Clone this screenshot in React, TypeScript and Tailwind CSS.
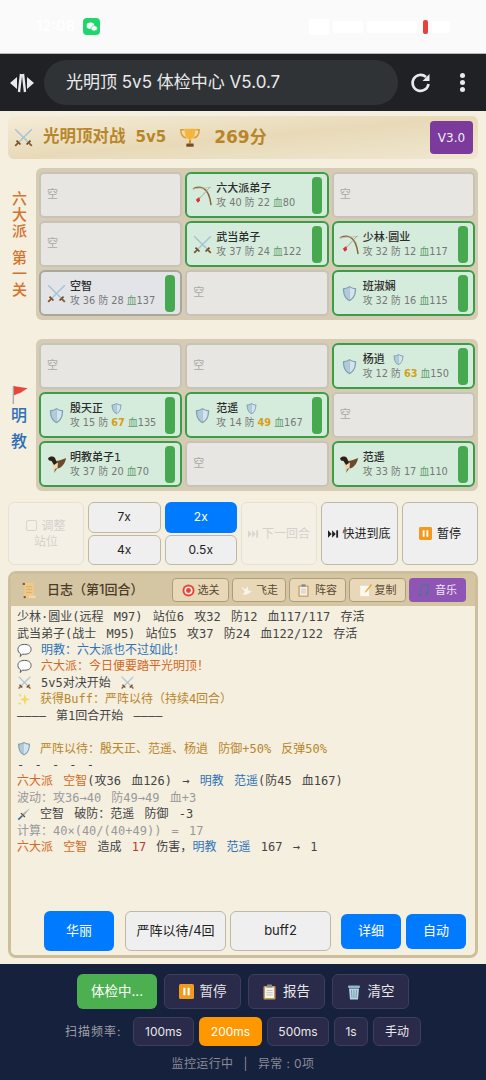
import React from 'react';

const cjk = '"Noto Sans CJK SC", sans-serif';

// small drawings standing in for the emoji of the original
const Swords = ({className = 'w-[21px] h-[21px]'}: {className?: string}) => (
    <svg viewBox="0 0 24 24" className={className}>
        <path d="M21.5 2.5 L6 18" stroke="#a8c4d4" strokeWidth="1.8"/>
        <path d="M2.5 2.5 L18 18" stroke="#a8c4d4" strokeWidth="1.8"/>
        <path d="M4 15.5 L8.5 20 M20 15.5 L15.5 20" stroke="#6b4a2a" strokeWidth="2"/>
        <path d="M6.5 17.5 L2.5 21.5 M17.5 17.5 L21.5 21.5" stroke="#8a5a2c" strokeWidth="2.2"/>
    </svg>
);

const Bow = () => (
    <svg viewBox="0 0 22 22" className="w-[21px] h-[21px]">
        <path d="M1 4 C5 1.5 9 2 12 3.5 C17 6 19 13 20 21" fill="none" stroke="#8a6238" strokeWidth="1.5"/>
        <path d="M1 4 L20 2.5" stroke="#c4b8a6" strokeWidth="0.8"/>
        <path d="M19 2 L7 15" stroke="#a89a88" strokeWidth="0.9"/>
        <path d="M4 15.5 L7.5 12.5 L8.5 16.5 L6 18.5 Z" fill="#d8303c"/>
    </svg>
);

const Shield = ({className = 'w-[15px] h-[17px]'}: {className?: string}) => (
    <svg viewBox="0 0 18 20" className={className}>
        <path d="M9 1 C11.5 3 14.5 3.6 17 3.6 C17 11 15 16 9 19.4 C3 16 1 11 1 3.6 C3.5 3.6 6.5 3 9 1 Z" fill="#7f9fb2"/>
        <path d="M9 2.6 C11 4 13.5 4.8 15.4 4.9 C15.3 10.8 13.8 15 9 17.6 Z" fill="#d3e4ee"/>
        <path d="M9 2.6 C7 4 4.5 4.8 2.6 4.9 C2.7 10.8 4.2 15 9 17.6 Z" fill="#b2cbda"/>
    </svg>
);

const Eagle = () => (
    <svg viewBox="0 0 18 18" className="w-[18px] h-[18px]">
        <path d="M7 6 C11 6 15 4.5 18 3 C17.5 8 14 12.5 10 13.5 L6 11 Z" fill="#6e4a2c"/>
        <path d="M4 6 L10 8 L9.5 13 L6 18 L5 14 Z" fill="#e8d8b0"/>
        <path d="M7 14 L9.5 13 L6 18 Z" fill="#7a5a38"/>
        <path d="M0 3.5 C2 1 5 1 7 3 L9 8 L6 10 L3.5 6 L1 5.5 Z" fill="#2e2018"/>
    </svg>
);

const Bubble = () => (
    <svg viewBox="0 0 16 16" className="w-[15px] h-[15px] shrink-0">
        <path d="M8 1.5 C12.5 1.5 15 3.5 15 6.8 C15 10 12.5 12 8 12 L5.5 12 L3.5 14.5 L3.8 11.5 C2 10.5 1 9 1 6.8 C1 3.5 3.5 1.5 8 1.5 Z" fill="#fbfbfb" stroke="#555" strokeWidth="1"/>
    </svg>
);

const Spark = () => (
    <svg viewBox="0 0 16 16" className="w-[14px] h-[14px] shrink-0">
        <path d="M9 2 L10.4 7 L15 8.5 L10.4 10 L9 15 L7.6 10 L3 8.5 L7.6 7 Z" fill="#f6d860"/>
        <path d="M3.5 1 L4.2 3 L6 3.6 L4.2 4.2 L3.5 6.2 L2.8 4.2 L1 3.6 L2.8 3 Z" fill="#f6d860"/>
        <path d="M3 11 L3.6 12.6 L5 13.2 L3.6 13.8 L3 15.4 L2.4 13.8 L1 13.2 L2.4 12.6 Z" fill="#f6d860"/>
    </svg>
);

const Dagger = () => (
    <svg viewBox="0 0 16 16" className="w-[14px] h-[14px] shrink-0">
        <path d="M15 1 L6 8 L8 10 Z" fill="#9db4c2"/>
        <path d="M4.5 7 L9 11.5" stroke="#6b4a2a" strokeWidth="1.6"/>
        <path d="M6 10 L1.5 14.5" stroke="#3b6f8f" strokeWidth="2"/>
    </svg>
);

const PauseBox = ({className = 'w-[13px] h-[13px]'}: {className?: string}) => (
    <svg viewBox="0 0 14 14" className={className}>
        <rect width="14" height="14" rx="1.5" fill="#f39a1c"/>
        <rect x="4" y="3.5" width="2" height="7" fill="#fff"/>
        <rect x="8" y="3.5" width="2" height="7" fill="#fff"/>
    </svg>
);

const SkipEnd = ({color}: {color: string}) => (
    <svg viewBox="0 0 12 8" className="w-[11px] h-[8px]">
        <path d="M0 0 L4 4 L0 8 Z M4.5 0 L8.5 4 L4.5 8 Z" fill={color}/>
        <rect x="9" y="0" width="2" height="8" fill={color}/>
    </svg>
);

const Clipboard = ({className = 'w-[13px] h-[15px]'}: {className?: string}) => (
    <svg viewBox="0 0 13 15" className={className}>
        <rect x="0.5" y="1.5" width="12" height="13.5" rx="1" fill="#c99b5a"/>
        <rect x="2" y="3" width="9" height="10.5" fill="#f4f1ea"/>
        <rect x="4" y="0" width="5" height="3" rx="0.5" fill="#8c8c8c"/>
        <path d="M3.5 6 H9.5 M3.5 8.2 H9.5 M3.5 10.4 H9.5" stroke="#b9b9b9" strokeWidth="0.8"/>
    </svg>
);

const Trash = () => (
    <svg viewBox="0 0 14 16" className="w-[14px] h-[16px]">
        <rect x="1" y="1.5" width="12" height="2.5" rx="1" fill="#8db8cc"/>
        <path d="M2 4.5 H12 L11 15.5 H3 Z" fill="#b7d5e2"/>
        <path d="M4.5 6 L5 14 M7 6 V14 M9.5 6 L9 14" stroke="#6d97ab" strokeWidth="0.9"/>
    </svg>
);

type CardData = {
    name: string;
    icon: React.ReactNode;
    atk: number;
    def: number;
    hp: number;
    buffed?: boolean;
    dead?: boolean;
};

const Empty = () => (
    <div className="h-[46px] rounded-[5px] border-2 border-[#c8c3b8] bg-[#e8e6e2] flex items-center pl-[6px] text-[11px] text-[#a9a9a5]">
        空
    </div>
);

const Card = ({name, icon, atk, def, hp, buffed, dead}: CardData) => (
    <div
        className={`h-[46px] rounded-[6px] border-2 flex items-center pl-[3px] pr-[5px] ${
            dead ? 'border-[#a9a69c] bg-[#e3e4e8]' : 'border-[#3a9d4a] bg-[#d5ecdc]'
        }`}
    >
        <div className="w-[25px] flex justify-center shrink-0">{icon}</div>
        <div className="flex-1 min-w-0 pl-[1px]">
            <div className="flex items-center text-[11px] leading-[15px] text-[#2b2b2b] font-medium">
                <span>{name}</span>
                {buffed && <span className="ml-[8px] flex"><Shield className="w-[11px] h-[13px]"/></span>}
            </div>
            <div className="text-[9.75px] leading-[13px] text-[#777] whitespace-nowrap">
                攻 {atk} 防 <span className={buffed ? 'text-[#d4a017] font-bold' : ''}>{def}</span> <span className="text-[#5d9c6a]">血</span>{hp}
            </div>
        </div>
        <div className="w-[10px] h-[37px] rounded-[4px] bg-[#46a94f] shrink-0"/>
    </div>
);

const Grid = ({children}: {children: React.ReactNode}) => (
    <div className="flex-1 grid grid-cols-3 gap-x-[3px] gap-y-[3px] rounded-[6px] bg-[#d6ccb4] px-[3px] py-[4px]">
        {children}
    </div>
);

const ctl = 'rounded-[6px] border border-[#bfb8a8] bg-[#efefef] flex items-center justify-center text-[12px] text-[#222]';
const ghost = 'rounded-[6px] border border-[#e6e1d5] bg-[#f4f0e6] flex items-center justify-center text-[12px] text-[#d4d1ca]';
const logBtn = 'h-[24px] rounded-[4px] border border-[#ad9d7d] bg-[#e8d8b8] flex items-center justify-center gap-[3px] text-[11px] text-[#5a4a32]';
const darkBtn = 'rounded-[6px] border border-[#3d3d5c] bg-[#2a2a4a] flex items-center justify-center text-[#e8e8e8]';

const Line = ({children, className = ''}: {children?: React.ReactNode; className?: string}) => (
    <div className={`flex items-center h-[16.43px] whitespace-pre [word-spacing:3px] ${className}`}>{children}</div>
);

const O = ({children}: {children: React.ReactNode}) => <span className="text-[#d2691e]">{children}</span>;
const B = ({children}: {children: React.ReactNode}) => <span className="text-[#2f73b5]">{children}</span>;

export default function App() {
    return (
        <div
            className="w-[486px] h-[1080px] overflow-hidden flex flex-col bg-[#f5efe0]"
            style={{fontFamily: `"DejaVu Sans", ${cjk}`}}
        >
            {/* Status bar */}
            <div className="h-[54px] bg-[#fafafa] flex items-center pl-[36px] pr-[36px] border-b border-[#b9b9b9] shrink-0">
                <span className="text-[15px] font-medium text-white" style={{fontFamily: `Inter, ${cjk}`}}>12:08</span>
                <div className="ml-[8px] w-[17px] h-[17px] rounded-[4px] bg-[#1fd66a] flex items-center justify-center">
                    <svg viewBox="0 0 14 12" className="w-[12px] h-[10px]">
                        <ellipse cx="5.2" cy="4.4" rx="4.6" ry="3.8" fill="#fff"/>
                        <ellipse cx="9.6" cy="7.6" rx="3.8" ry="3.1" fill="#fff" stroke="#1fd66a" strokeWidth="0.7"/>
                    </svg>
                </div>
                <div className="flex-1 flex justify-end items-center gap-[4px]">
                    <div className="w-[20px] h-[16px] bg-white rounded-[2px]"/>
                    <div className="w-[30px] h-[12px] bg-white rounded-[2px]"/>
                    <div className="w-[50px] h-[12px] bg-white rounded-[2px]"/>
                    <div className="ml-[2px] w-[5px] h-[14px] bg-[#e8403f] rounded-[2px]"/>
                    <div className="w-[18px] h-[12px] bg-white rounded-[2px]"/>
                </div>
            </div>

            {/* Browser bar */}
            <div className="h-[57px] bg-[#202124] flex items-center shrink-0 pl-[9px] pr-[20px]">
                <svg viewBox="0 0 26 20" className="w-[26px] h-[20px]">
                    <path d="M8 4 L1 10 L8 16 Z M18 4 L25 10 L18 16 Z" fill="#e8eaed"/>
                    <path d="M12 1 L10 19 M14 1 L16 19" stroke="#e8eaed" strokeWidth="2.4"/>
                </svg>
                <div
                    className="ml-[9px] w-[354px] h-[45px] rounded-full bg-[#303336] flex items-center pl-[22px] text-[17px] text-[#e8eaed]"
                    style={{fontFamily: `Inter, ${cjk}`}}
                >
                    光明顶 5v5 体检中心 V5.0.7
                </div>
                <svg viewBox="0 0 24 24" className="ml-[11px] w-[24px] h-[24px]" fill="none" stroke="#e8eaed" strokeWidth="2.6">
                    <path d="M19.5 13 A8 8 0 1 1 17 6"/>
                    <path d="M20.5 3 V10 H13.5 Z" fill="#e8eaed" stroke="none"/>
                </svg>
                <div className="ml-[27px] flex flex-col gap-[2px]">
                    <div className="w-[5px] h-[5px] rounded-full bg-[#e8eaed]"/>
                    <div className="w-[5px] h-[5px] rounded-full bg-[#e8eaed]"/>
                    <div className="w-[5px] h-[5px] rounded-full bg-[#e8eaed]"/>
                </div>
            </div>

            <div className="flex-1 flex flex-col px-[8px] min-h-0">
                {/* Score banner */}
                <div className="mt-[5px] h-[43px] rounded-[6px] bg-gradient-to-br from-[#f5ecd8] via-[#e8dab8] to-[#f0e6d0] flex items-center pl-[5px] pr-[5px] text-[#b8862a] shrink-0">
                    <Swords/>
                    <span className="ml-[9px] text-[16.5px] font-semibold leading-none">光明顶对战</span>
                    <span className="ml-[10px] text-[15px] font-semibold leading-none">5v5</span>
                    <svg viewBox="0 0 24 24" className="ml-[13px] w-[22px] h-[22px]">
                        <path d="M6 3 H2 C2 8 4 11 8 12 M18 3 H22 C22 8 20 11 16 12" fill="none" stroke="#e0a030" strokeWidth="1.8"/>
                        <path d="M6 2 H18 C18 9 16 13 12 14 C8 13 6 9 6 2 Z" fill="#f4b63a"/>
                        <rect x="11" y="14" width="2" height="4" fill="#c98a20"/>
                        <rect x="8" y="18" width="8" height="3.5" rx="0.5" fill="#7a4c24"/>
                    </svg>
                    <span className="ml-[13px] text-[17px] font-semibold leading-none">269分</span>
                    <div className="ml-auto w-[43px] h-[33px] rounded-[4px] bg-[#7b3a9c] text-[#eee] text-[12px] flex items-center justify-center">
                        V3.0
                    </div>
                </div>

                {/* Six sects */}
                <div className="mt-[9px] flex shrink-0">
                    <div className="w-[28px] flex flex-col items-center justify-center text-[#d2742e] text-[15px] leading-[16px] font-medium pr-[5px]">
                        <span>六</span><span>大</span><span>派</span>
                        <span className="mt-[11px]">第</span><span>一</span><span>关</span>
                    </div>
                    <Grid>
                        <Empty/>
                        <Card name="六大派弟子" icon={<Bow/>} atk={40} def={22} hp={80}/>
                        <Empty/>
                        <Empty/>
                        <Card name="武当弟子" icon={<Swords/>} atk={37} def={24} hp={122}/>
                        <Card name="少林·圆业" icon={<Bow/>} atk={32} def={12} hp={117}/>
                        <Card name="空智" dead icon={<Swords/>} atk={36} def={28} hp={137}/>
                        <Empty/>
                        <Card name="班淑娴" icon={<Shield/>} atk={32} def={16} hp={115}/>
                    </Grid>
                </div>

                {/* Ming cult */}
                <div className="mt-[19px] flex shrink-0">
                    <div className="w-[28px] flex flex-col items-center justify-center pr-[6px] text-[#2f6fb5] text-[16px] font-medium pt-[10px]">
                        <svg viewBox="0 0 18 20" className="w-[18px] h-[19px] ml-[1px]">
                            <path d="M2 1 L17 3.5 L10 8 L2 11 Z" fill="#e8453c"/>
                            <path d="M2 1 V20" stroke="#a8a8a8" strokeWidth="1.4"/>
                        </svg>
                        <span className="leading-[26px] mt-[-1px]">明</span>
                        <span className="leading-[26px]">教</span>
                    </div>
                    <Grid>
                        <Empty/>
                        <Empty/>
                        <Card name="杨逍" buffed icon={<Shield/>} atk={12} def={63} hp={150}/>
                        <Card name="殷天正" buffed icon={<Shield/>} atk={15} def={67} hp={135}/>
                        <Card name="范遥" buffed icon={<Shield/>} atk={14} def={49} hp={167}/>
                        <Empty/>
                        <Card name="明教弟子1" icon={<Eagle/>} atk={37} def={20} hp={70}/>
                        <Empty/>
                        <Card name="范遥" icon={<Eagle/>} atk={33} def={17} hp={110}/>
                    </Grid>
                </div>

                {/* Playback controls */}
                <div className="mt-[11px] h-[63px] flex gap-[4px] shrink-0" style={{fontFamily: `Inter, ${cjk}`}}>
                    <div className={`${ghost} w-[76px] flex-col leading-[16px]`}>
                        <span className="flex items-center gap-[4px]">
                            <span className="w-[11px] h-[11px] border border-[#d9d6cf] rounded-[2px]"/>调整
                        </span>
                        <span>站位</span>
                    </div>
                    <div className="w-[149px] grid grid-cols-2 grid-rows-2 gap-x-[4px] gap-y-[2px]">
                        <div className={ctl}>7x</div>
                        <div className="rounded-[6px] bg-[#007bff] text-white text-[12px] flex items-center justify-center">2x</div>
                        <div className={ctl}>4x</div>
                        <div className={ctl}>0.5x</div>
                    </div>
                    <div className={`${ghost} w-[76px] gap-[3px]`}><SkipEnd color="#d9d6cf"/>下一回合</div>
                    <div className={`${ctl} w-[77px] gap-[3px]`}><SkipEnd color="#222"/>快进到底</div>
                    <div className={`${ctl} w-[76px] gap-[5px]`}><PauseBox/>暂停</div>
                </div>

                {/* Battle log */}
                <div className="mt-[6px] h-[387px] rounded-[8px] border-[3px] border-[#cdbf9c] flex flex-col shrink-0 overflow-hidden">
                    <div className="h-[32px] bg-[#d4c6a2] flex items-center pl-[10px] pr-[9px] shrink-0" style={{fontFamily: `Inter, ${cjk}`}}>
                        <svg viewBox="0 0 16 18" className="w-[16px] h-[17px]">
                            <rect x="3" y="1" width="10" height="16" fill="#f0c98a"/>
                            <path d="M5 5 H11 M5 8 H11 M5 11 H11" stroke="#d8a860" strokeWidth="0.9"/>
                            <circle cx="2.5" cy="2" r="1.3" fill="#7a5a30"/>
                            <circle cx="3.5" cy="16" r="1.3" fill="#7a5a30"/>
                            <rect x="8" y="14.5" width="7" height="2.5" fill="#f5d8a5"/>
                        </svg>
                        <span className="ml-[10px] text-[13px] font-medium text-[#4a3c28]">日志&#xFF08;第1回合&#xFF09;</span>
                        <div className="ml-auto flex gap-[3px]">
                            <div className={`${logBtn} w-[57px]`}>
                                <svg viewBox="0 0 14 14" className="w-[13px] h-[13px]">
                                    <circle cx="7" cy="7" r="6.5" fill="#e2453c"/>
                                    <circle cx="7" cy="7" r="4.4" fill="#f6ede0"/>
                                    <circle cx="7" cy="7" r="2.6" fill="#e2453c"/>
                                </svg>
                                选关
                            </div>
                            <div className={`${logBtn} w-[54px]`}>
                                <svg viewBox="0 0 14 12" className="w-[13px] h-[11px]">
                                    <path d="M1 2 L6 5 L8 1 L9 6 L13 7 L8 10 L3 11 L5 7 Z" fill="#f7f4ec"/>
                                </svg>
                                飞走
                            </div>
                            <div className={`${logBtn} w-[57px] gap-[6px]`}><Clipboard className="w-[11px] h-[13px]"/>阵容</div>
                            <div className={`${logBtn} w-[57px]`}>
                                <svg viewBox="0 0 14 14" className="w-[13px] h-[14px]">
                                    <rect x="1" y="2" width="10" height="12" fill="#fbf8ee" stroke="#d9d3c2" strokeWidth="0.5"/>
                                    <path d="M13 0.5 L7 8 L6 10 L8 9 L14 2 Z" fill="#e8a62e"/>
                                </svg>
                                复制
                            </div>
                            <div className="h-[24px] w-[57px] rounded-[4px] bg-[#8f55b5] flex items-center justify-center gap-[6px] text-[11px] text-[#efe6f5]">
                                <svg viewBox="0 0 12 14" className="w-[11px] h-[13px]">
                                    <path d="M3 2 L11 0.5 V10.5 M3 2 V12" fill="none" stroke="#54709a" strokeWidth="1.4"/>
                                    <ellipse cx="2" cy="12" rx="2" ry="1.5" fill="#54709a"/>
                                    <ellipse cx="9.5" cy="10.8" rx="2" ry="1.5" fill="#54709a"/>
                                </svg>
                                音乐
                            </div>
                        </div>
                    </div>

                    <div className="flex-1 bg-[#f5efe0] pl-[6px] pt-[3px] flex flex-col text-[12px] text-[#444] min-h-0" style={{fontFamily: `"DejaVu Sans Mono", ${cjk}`}}>
                        <Line>少林·圆业(远程 M97) 站位6 攻32 防12 血117/117 存活</Line>
                        <Line>武当弟子(战士 M95) 站位5 攻37 防24 血122/122 存活</Line>
                        <Line><Bubble/><span className="ml-[9px] text-[#2f73b5]">明教&#xFF1A;六大派也不过如此&#xFF01;</span></Line>
                        <Line><Bubble/><span className="ml-[9px] text-[#d2691e]">六大派&#xFF1A;今日便要踏平光明顶&#xFF01;</span></Line>
                        <Line><Swords className="w-[15px] h-[15px] shrink-0"/><span className="mx-[9px]">5v5对决开始</span><Swords className="w-[15px] h-[15px] shrink-0"/></Line>
                        <Line><Spark/><span className="ml-[9px] text-[#b8862a]">获得Buff&#xFF1A;严阵以待&#xFF08;持续4回合&#xFF09;</span></Line>
                        <Line>———— 第1回合开始 ————</Line>
                        <Line/>
                        <Line><Shield className="w-[14px] h-[15px] shrink-0"/><span className="ml-[9px] text-[#b8862a]">严阵以待&#xFF1A;殷天正、范遥、杨逍 防御+50% 反弹50%</span></Line>
                        <Line>- - - - -</Line>
                        <Line><O>六大派 空智</O>(攻36 血126) → <B>明教 范遥</B>(防45 血167)</Line>
                        <Line className="text-[#999]">波动&#xFF1A;攻36→40 防49→49 血+3</Line>
                        <Line><Dagger/><span className="ml-[9px]">空智 破防&#xFF1A;范遥 防御 -3</span></Line>
                        <Line className="text-[#999]">计算&#xFF1A;40×(40/(40+49)) = 17</Line>
                        <Line><O>六大派 空智</O> 造成 <span className="text-[#c0392b]">17</span> 伤害&#xFF0C;<B>明教 范遥</B> 167 → 1</Line>

                        <div className="mt-auto mb-[4px] flex items-center pl-[27px] text-[14px]" style={{fontFamily: `Inter, ${cjk}`}}>
                            <div className="w-[70px] h-[40px] rounded-[6px] bg-[#007bff] text-white flex items-center justify-center text-[13px]">华丽</div>
                            <div className={`${ctl} ml-[11px] w-[101px] h-[40px] !text-[13px]`}>严阵以待/4回</div>
                            <div className={`${ctl} ml-[4px] w-[101px] h-[40px] !text-[13px]`}>buff2</div>
                            <div className="ml-[10px] w-[60px] h-[35px] rounded-[6px] bg-[#007bff] text-white flex items-center justify-center text-[13px]">详细</div>
                            <div className="ml-[5px] w-[60px] h-[35px] rounded-[6px] bg-[#007bff] text-white flex items-center justify-center text-[13px]">自动</div>
                        </div>
                    </div>
                </div>
            </div>

            {/* Monitor footer */}
            <div className="h-[116px] bg-[#16213e] flex flex-col items-center shrink-0 pt-[10px]" style={{fontFamily: `Inter, ${cjk}`}}>
                <div className="h-[35px] flex gap-[7px] text-[13.5px]">
                    <div className="w-[80px] rounded-[6px] bg-[#4caf50] text-white flex items-center justify-center">体检中...</div>
                    <div className={`${darkBtn} w-[77px] gap-[6px]`}><PauseBox className="w-[15px] h-[15px]"/>暂停</div>
                    <div className={`${darkBtn} w-[77px] gap-[7px]`}><Clipboard className="w-[13px] h-[16px]"/>报告</div>
                    <div className={`${darkBtn} w-[77px] gap-[7px]`}><Trash/>清空</div>
                </div>
                <div className="mt-[8px] h-[29px] flex items-center text-[12px]">
                    <span className="text-[#a0a0a8] w-[68px] tracking-[1px]">扫描频率:</span>
                    <div className="h-full flex gap-[5px]">
                        <div className={`${darkBtn} w-[61px]`}>100ms</div>
                        <div className="w-[63px] rounded-[6px] bg-[#ff9800] text-white flex items-center justify-center">200ms</div>
                        <div className={`${darkBtn} w-[62px]`}>500ms</div>
                        <div className={`${darkBtn} w-[34px]`}>1s</div>
                        <div className={`${darkBtn} w-[48px]`}>手动</div>
                    </div>
                </div>
                <div className="mt-[9px] flex text-[12px] tracking-[0.4px] text-[#8a8a96]">
                    <span>监控运行中</span>
                    <span className="mx-[10px]">|</span>
                    <span>异常 : 0项</span>
                </div>
            </div>
        </div>
    );
}
